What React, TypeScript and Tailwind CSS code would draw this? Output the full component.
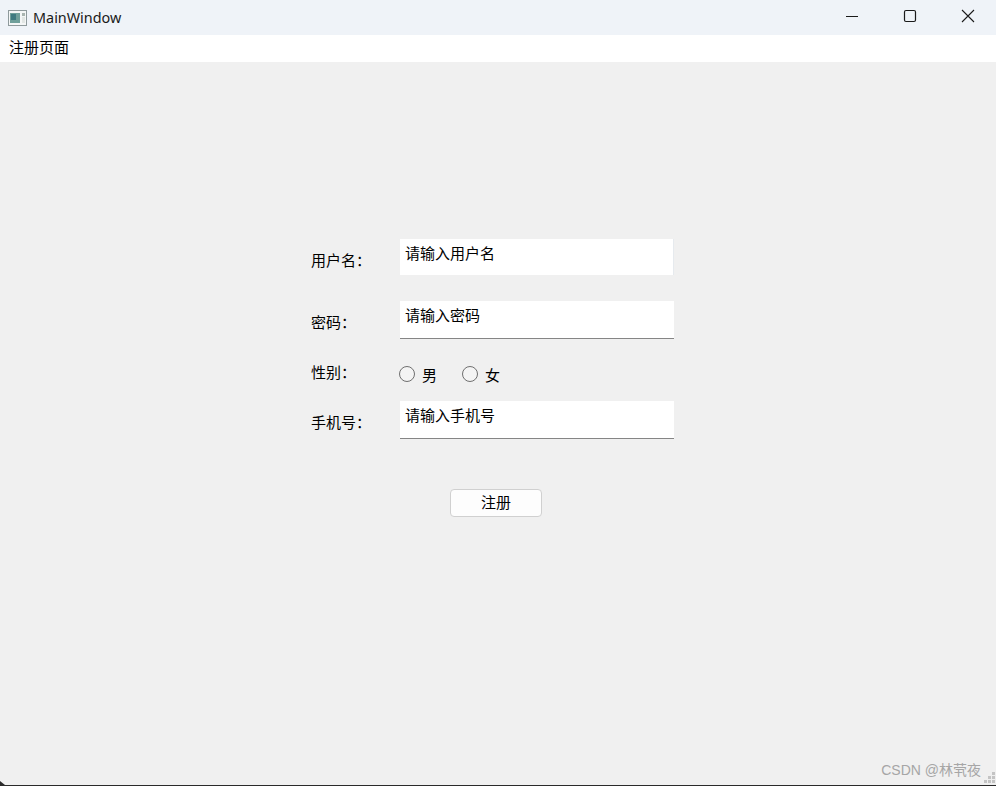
import React from 'react';

const FONT = 'font-["Liberation_Sans","Noto_Sans_CJK_SC",sans-serif]';

function AppIcon() {
  return (
    <svg width="19" height="16" viewBox="0 0 19 16" className="shrink-0">
      <rect x="0.5" y="0.5" width="18" height="15" fill="#f4f6f6" stroke="#8f9a9c" />
      <rect x="2" y="3" width="10" height="10" fill="#6f9f9a" />
      <rect x="3" y="4" width="5" height="6" fill="#3f7a80" />
      <rect x="14" y="3" width="3" height="3" fill="#a9b4b0" />
      <rect x="14" y="7" width="3" height="6" fill="#e2e6e4" />
    </svg>
  );
}

function WindowControls() {
  return (
    <div className="flex items-center text-[#1a1a1a] mr-[-1px]">
      <div className="w-[58px] flex justify-center">
        <svg width="14" height="14" viewBox="0 0 14 14">
          <path d="M1 7.5h12" stroke="currentColor" strokeWidth="1" />
        </svg>
      </div>
      <div className="w-[58px] flex justify-center">
        <svg width="14" height="14" viewBox="0 0 14 14">
          <rect x="1.5" y="1.5" width="11" height="11" rx="1.5" fill="none" stroke="currentColor" strokeWidth="1.2" />
        </svg>
      </div>
      <div className="w-[58px] flex justify-center">
        <svg width="14" height="14" viewBox="0 0 14 14">
          <path d="M1 1l12 12M13 1L1 13" stroke="currentColor" strokeWidth="1.1" />
        </svg>
      </div>
    </div>
  );
}

function TextField({ placeholder, underline }: { placeholder: string; underline?: boolean }) {
  return (
    <div
      className={`w-[274px] bg-white px-[5px] pt-[5px] text-[15px] leading-[20px] text-black ${
        underline ? 'h-[38px] border-b border-[#858585]' : 'h-[36px] border-r border-[#e6eaee]'
      }`}
    >
      {placeholder}
    </div>
  );
}

function Radio({ label }: { label: string }) {
  return (
    <div className="flex items-center">
      <span className="w-[16px] h-[16px] rounded-full border border-[#6f6f6f] bg-[#f4f4f4] relative top-[1px]" />
      <span className="ml-[7px] text-[15px] leading-[20px] text-black relative top-[3px]">{label}</span>
    </div>
  );
}

function SizeGrip() {
  return (
    <svg width="12" height="12" viewBox="0 0 12 12" className="absolute right-0 bottom-[2px]">
      <g fill="#c4c4c4">
        <rect x="8" y="1" width="3" height="3" />
        <rect x="4" y="5" width="3" height="3" />
        <rect x="8" y="5" width="3" height="3" />
        <rect x="0" y="9" width="3" height="3" />
        <rect x="4" y="9" width="3" height="3" />
        <rect x="8" y="9" width="3" height="3" />
      </g>
    </svg>
  );
}

export default function App() {
  return (
    <div className={`${FONT} relative w-[996px] h-[786px] flex flex-col overflow-hidden bg-[#f0f0f0] border-b border-[#2a2a2a]`}>
      <header className="h-[35px] shrink-0 bg-[#eff3f8] flex items-center justify-between pl-[8px] pb-[3px]">
        <div className="flex items-center gap-[6px] relative top-[2px]">
          <AppIcon />
          <span className="text-[14.4px] text-[#1a1a1a] font-['Noto_Sans',sans-serif]">MainWindow</span>
        </div>
        <WindowControls />
      </header>

      <div className="h-[27px] shrink-0 bg-white pl-[9px] flex items-center text-[15px] text-black">注册页面</div>

      <main className="flex-1 flex flex-col pt-[177px] pl-[311px]">
        <div className="flex items-start h-[62px]">
          <span className="w-[89px] pt-[12px] text-[15px] leading-[20px] text-black">用户名：</span>
          <TextField placeholder="请输入用户名" />
        </div>
        <div className="flex items-start h-[62px]">
          <span className="w-[89px] pt-[12px] text-[15px] leading-[20px] text-black">密码：</span>
          <TextField placeholder="请输入密码" underline />
        </div>
        <div className="flex items-start h-[38px]">
          <span className="w-[88px] text-[15px] leading-[20px] text-black">性别：</span>
          <div className="flex gap-[25px]">
            <Radio label="男" />
            <Radio label="女" />
          </div>
        </div>
        <div className="flex items-start h-[88px]">
          <span className="w-[89px] pt-[12px] text-[15px] leading-[20px] text-black">手机号：</span>
          <TextField placeholder="请输入手机号" underline />
        </div>
        <button className="ml-[139px] w-[92px] h-[28px] bg-[#fdfdfd] border border-[#d0d0d0] rounded-[4px] text-[15px] text-black">
          注册
        </button>
      </main>

      <span className="absolute right-[15px] bottom-[6px] text-[14px] leading-[18px] text-[#a6a6a6]">CSDN @林茕夜</span>
      <SizeGrip />
      <svg width="5" height="4" viewBox="0 0 5 4" className="absolute left-0 bottom-0">
        <path d="M0 0l5 4H0z" fill="#2a2a2a" />
      </svg>
    </div>
  );
}
